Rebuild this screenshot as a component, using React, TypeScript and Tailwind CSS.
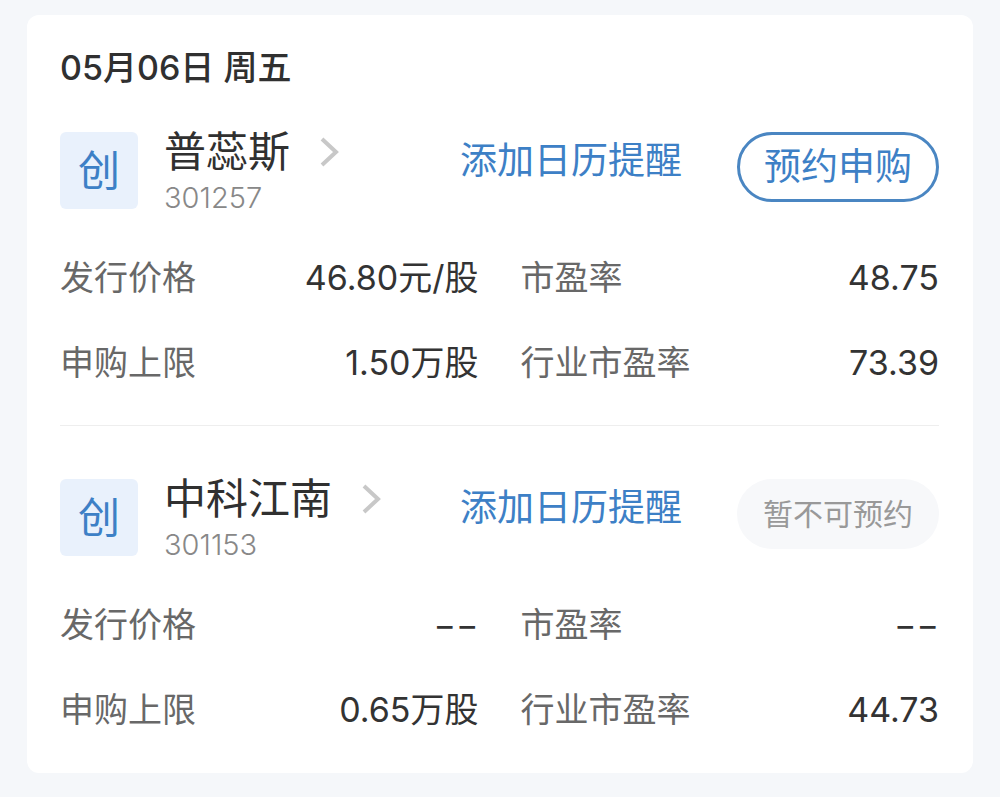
interface Stock {
  name: string;
  code: string;
  price: string;
  limit: string;
  pe: string;
  industryPe: string;
  bookable: boolean;
}

const stocks: Stock[] = [
  { name: '普蕊斯', code: '301257', price: '46.80元/股', limit: '1.50万股', pe: '48.75', industryPe: '73.39', bookable: true },
  { name: '中科江南', code: '301153', price: '−−', limit: '0.65万股', pe: '−−', industryPe: '44.73', bookable: false },
];

function Chevron() {
  return (
    <svg className="h-[30px] w-5" viewBox="0 0 20 30" fill="none" stroke="#c8c8c8" strokeWidth="4" aria-hidden="true">
      <path d="M2 2 L16 15 L2 28" />
    </svg>
  );
}

function Field({ label, value }: { label: string; value: string }) {
  return (
    <div className="flex items-center justify-between">
      <dt className="text-[#686868]">{label}</dt>
      <dd className="text-[#333333]">{value}</dd>
    </div>
  );
}

function StockItem({ stock }: { stock: Stock }) {
  return (
    <article>
      <div className="flex items-start">
        <span className="mt-1 flex h-[77px] w-[78px] shrink-0 items-center justify-center rounded-md bg-[#e9f1fc] text-[42px] text-[#3d80c6]">
          创
        </span>
        <div className="ml-[26px] flex-1">
          <a href="#" className="flex items-center gap-[30px] text-[42px] leading-12 text-[#303030]">
            {stock.name}
            <Chevron />
          </a>
          <p className="mt-1 text-[29px] leading-9 font-light text-[#888888]">{stock.code}</p>
        </div>
        <button className="mt-2 text-[37px] leading-[50px] text-[#3d80c6]">添加日历提醒</button>
        {stock.bookable ? (
          <button className="mt-1 ml-[55px] h-[70px] w-[202px] rounded-full border-3 border-[#4a86c2] text-[37px] text-[#3d80c6]">
            预约申购
          </button>
        ) : (
          <button disabled className="mt-1 ml-[55px] h-[70px] w-[202px] rounded-full bg-[#f7f8fa] text-[30px] text-[#999999]">
            暂不可预约
          </button>
        )}
      </div>
      <dl className="mt-[38px] grid grid-cols-2 gap-x-[42px] gap-y-[37px] text-[34px] leading-12">
        <Field label="发行价格" value={stock.price} />
        <Field label="市盈率" value={stock.pe} />
        <Field label="申购上限" value={stock.limit} />
        <Field label="行业市盈率" value={stock.industryPe} />
      </dl>
    </article>
  );
}

export default function App() {
  return (
    <main className="min-h-screen bg-[#f5f7fa] px-[27px] pt-[15px] pb-6 font-['Inter','Noto_Sans_CJK_SC',sans-serif]">
      <section className="rounded-xl bg-white pt-[29px] pr-[34px] pb-[39px] pl-[33px]">
        <h1 className="text-[34px] leading-12 font-medium text-[#303030]">05月06日 周五</h1>
        <div className="mt-9 divide-y divide-[#eeeeee]">
          {stocks.map((stock) => (
            <div key={stock.code} className="pb-[38px] not-first:pt-[49px] last:pb-0">
              <StockItem stock={stock} />
            </div>
          ))}
        </div>
      </section>
    </main>
  );
}
